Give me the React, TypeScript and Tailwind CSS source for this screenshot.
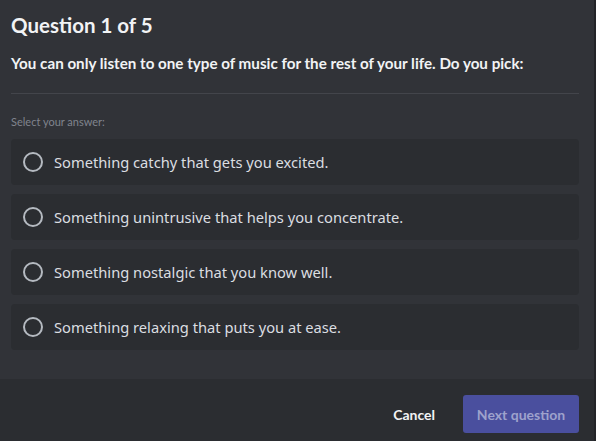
import { useState } from "react";

const options = [
  "Something catchy that gets you excited.",
  "Something unintrusive that helps you concentrate.",
  "Something nostalgic that you know well.",
  "Something relaxing that puts you at ease.",
];

export default function App() {
  const [selected, setSelected] = useState<number | null>(null);

  return (
    <div
      className="w-[596px] h-[441px] flex flex-col bg-[#313338] border-r-2 border-[#232428] overflow-hidden"
      style={{ fontFamily: '"Lato", "Noto Sans", sans-serif' }}
    >
      {/* Body */}
      <div className="flex-1 px-[11px] pr-[15px] pt-[13px]">
        <h1 className="text-[20.5px] leading-[24px] font-bold text-[#f2f3f5]">Question 1 of 5</h1>
        <p className="mt-[16px] text-[15.2px] leading-[20px] font-bold text-[#f2f3f5]">
          You can only listen to one type of music for the rest of your life. Do you pick:
        </p>
        <div className="mt-[20px] h-px bg-[#43454b]" />
        <p className="mt-[21px] text-[11px] leading-[14px] text-[#80848e]">Select your answer:</p>

        <div className="mt-[10px] flex flex-col gap-[9px]">
          {options.map((opt, i) => (
            <button
              key={opt}
              onClick={() => setSelected(i)}
              className="h-[46px] flex items-center gap-[11px] px-[12px] rounded-[4px] bg-[#2b2d31] text-left"
            >
              <span className="w-[20px] h-[20px] rounded-full border-2 border-[#b5bac1] flex items-center justify-center">
                {selected === i && <span className="w-[10px] h-[10px] rounded-full bg-[#b5bac1]" />}
              </span>
              <span
                className="text-[14.7px] leading-[20px] text-[#dbdee1]"
                style={{ fontFamily: '"Noto Sans", sans-serif' }}
              >
                {opt}
              </span>
            </button>
          ))}
        </div>
      </div>

      {/* Footer */}
      <div className="h-[62px] bg-[#2b2d31] flex items-start justify-end gap-[12px] pr-[15px] pt-[16px]">
        <button className="h-[38px] px-[16px] text-[14px] font-bold text-[#f2f3f5]">Cancel</button>
        <button className="h-[38px] w-[116px] rounded-[3px] bg-[#4a4f9e] text-[14px] font-bold text-[#9ea2cc]">
          Next question
        </button>
      </div>
    </div>
  );
}
